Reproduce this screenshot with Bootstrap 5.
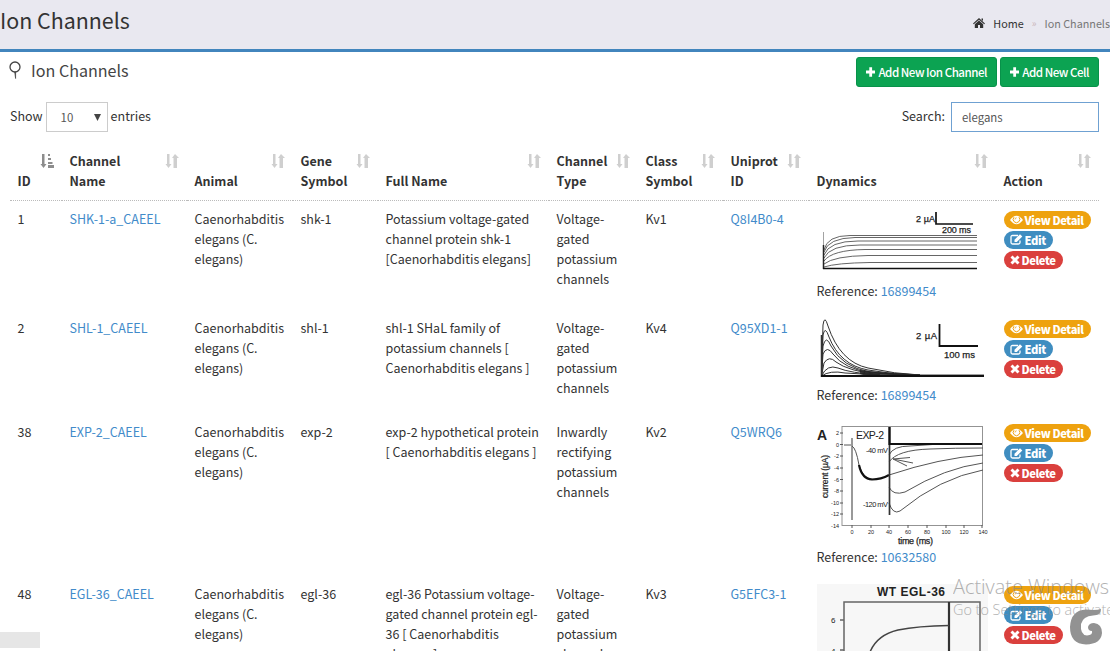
<!DOCTYPE html>
<html lang="en">
<head>
<meta charset="utf-8">
<title>Ion Channels</title>
<link href="https://cdn.jsdelivr.net/npm/bootstrap@5.3.0/dist/css/bootstrap.min.css" rel="stylesheet">
<script src="https://cdn.jsdelivr.net/npm/bootstrap@5.3.0/dist/js/bootstrap.bundle.min.js"></script>
<style>
html,body{height:651px;overflow:hidden}
body{font-family:"Noto Sans CJK SC",sans-serif;font-size:12.5px;line-height:20px;color:#333;background:#fff;position:relative}
a{color:#428bca;text-decoration:none}
.page-top{height:52px;background:#e9e8f0;border-bottom:3px solid #4285bd}
.page-top h1{font-size:21.4px;line-height:40px;font-weight:400;color:#333}
.crumbs{font-size:10.8px;color:#777;height:46px}
.crumbs a{color:#333}
.crumbs .sep{color:#ccb8bd;font-size:10px}
.portlet{padding:0 11px 0 10px}
.caption-row{height:38px;padding-top:5px}
.caption-text{font-size:16.1px;color:#444;margin-left:-1px}
.caption-label{padding:3px 0 0 10px}
.btn-add{background:#0ca352;border:1px solid #08924a;color:#fff;height:30px;border-radius:3px;font-size:11.6px;letter-spacing:-.5px;font-weight:500;padding:0 9px;gap:3px;white-space:nowrap}
.btn-ion{width:141px}.btn-cell{width:99px}
.btn-gap{gap:3px}
.filter-row{height:30px;margin-top:12px}
.filter-row .word{position:relative;top:-1px}
.len-box,.search-box{height:30px;border:1px solid #ccc;font-size:11.4px;color:#555;background:#fff}
.len-box{width:62px;margin:0 3px;padding:0 6px 0 14px}
.search-box{width:148px;border-color:#6fa1d2;padding:0 10px;margin-left:6px}
.channels{table-layout:fixed;width:1089px;margin-top:10px}
.channels th{height:58px;padding:8px 8px 9px 7.5px;vertical-align:bottom;position:relative;font-weight:700;border-bottom:1px dotted #bbb}
.channels td{padding:8px 8px 0 7.5px;vertical-align:top}
.channels th svg{position:absolute;right:8px;top:11px}
.row-a{height:109.500px}.row-b{height:104px}.row-c{height:162px}
.row-a{height:110px}
.trace{display:block;width:171px}
.tag{height:18px;border-radius:9px;color:#fff;font-weight:900;font-size:11.2px;letter-spacing:-.4px;line-height:18px;padding:0 0 0 6px;gap:2px;margin-bottom:2px;white-space:nowrap}
.tag svg{flex:none}
.tags{padding-top:2px}
.tag-view{background:#eea20f;width:87px}.tag-edit{background:#3f8dc0;width:49px}.tag-del{background:#da403d;width:59px}
.fig{font-family:"Liberation Sans",sans-serif;fill:#222}
.watermark{position:absolute;left:953px;top:574px;width:157px;overflow:hidden;color:#888;opacity:.65;white-space:nowrap;font-family:"Open Sans",sans-serif;font-weight:300}
.watermark .big{font-size:19.9px;line-height:26px}
.watermark .sub{font-size:14.4px;line-height:20px}
.status-tip{position:absolute;left:0;top:632px;width:40px;height:16px;background:#e6e6e6}
.corner-logo{position:absolute;left:1068px;top:607px}
</style>
</head>
<body>
<svg width="0" height="0" class="position-absolute">
<defs>
<symbol id="plus" viewBox="0 0 10 10"><path d="M3.500 0h3v3.500H10v3H6.500V10h-3V6.500H0v-3h3.500z" fill="#fff"/></symbol>
<symbol id="sort" viewBox="0 0 14 16"><path d="M2 1h2.500v10h2l-3 4-3-4H2zM8.500 15V5H7l3-4v14zM10 1l4 4h-2v10h-2z" fill="#cfcfcf"/></symbol>
<symbol id="eye" viewBox="0 0 13 10"><path d="M0 5Q6.500-3.500 13 5Q6.500 13.500 0 5z" fill="#fff"/><path d="M4 2.200A3.300 3.300 0 1 0 9 2.200" fill="none" stroke="#eea20f" stroke-width="1"/><path d="M5 4.500A1.600 1.600 0 0 1 6.600 2.800" fill="none" stroke="#eea20f" stroke-width=".8"/></symbol>
<symbol id="pen" viewBox="0 0 13 11"><path d="M8 1.500H2.500Q1 1.500 1 3v5.500Q1 10 2.500 10h6Q10 10 10 8.500V6.500" fill="none" stroke="#fff" stroke-width="1.300"/><path d="M4.500 8V5.800L10 .3 12.300 2.500 6.800 8z" fill="#fff"/></symbol>
<symbol id="cross" viewBox="0 0 10 10"><path d="M1.500 1.500l7 7M8.500 1.500l-7 7" stroke="#fff" stroke-width="2.900"/></symbol>
</defs>
</svg>
<header class="page-top d-flex justify-content-between">
<h1 class="m-0">Ion Channels</h1>
<nav class="crumbs d-flex align-items-center"><svg width="12" height="10" viewBox="0 0 12 10" class="me-2"><path d="M6 0L12 5.500l-.8.8L6 1.700.8 6.300 0 5.500zM8.500.5H10V3L8.500 1.700zM6 2.600L10.200 6.300V10H7V7H5v3H1.800V6.300z" fill="#333"/></svg><a href="#">Home</a><span class="sep mx-2">»</span><span>Ion Channels</span></nav>
</header>
<main class="portlet">
<div class="caption-row d-flex justify-content-between">
<div class="d-flex caption-text"><svg width="12" height="18" viewBox="0 0 12 18" class="mt-1"><circle cx="6" cy="6" r="5" fill="none" stroke="#444" stroke-width="1.300"/><path d="M5.700 11h.9v6.500z" fill="#444" stroke="#444" stroke-width=".7"/></svg><span class="caption-label">Ion Channels</span></div>
<div class="d-flex btn-gap"><button class="btn-add btn-ion d-flex align-items-center"><svg width="10" height="10"><use href="#plus"/></svg>Add New Ion Channel</button><button class="btn-add btn-cell d-flex align-items-center"><svg width="10" height="10"><use href="#plus"/></svg>Add New Cell</button></div>
</div>
<div class="filter-row d-flex justify-content-between align-items-center">
<div class="d-flex align-items-center"><span class="word">Show</span><div class="len-box d-flex align-items-center justify-content-between"><span>10</span><svg width="7" height="7"><path d="M0 0h7L3.500 7z" fill="#444"/></svg></div><span class="word">entries</span></div>
<div class="d-flex align-items-center"><span class="word">Search:</span><div class="search-box d-flex align-items-center">elegans</div></div>
</div>
<table class="channels">
<colgroup><col style="width:52px"><col style="width:125px"><col style="width:106px"><col style="width:85px"><col style="width:171px"><col style="width:89px"><col style="width:85px"><col style="width:86px"><col style="width:187px"><col style="width:103px"></colgroup>
<thead><tr>
<th>ID<svg width="14" height="16"><path d="M2 1h2.500v10h2l-3 4-3-4H2zM8 1h2v2H8zM8 5h3v2H8zM8 9h4.500v2H8zM8 12h6v3H8z" fill="#8d8d8d"/></svg></th>
<th>Channel<br>Name<svg width="14" height="16"><use href="#sort"/></svg></th><th>Animal<svg width="14" height="16"><use href="#sort"/></svg></th><th>Gene<br>Symbol<svg width="14" height="16"><use href="#sort"/></svg></th><th>Full Name<svg width="14" height="16"><use href="#sort"/></svg></th><th>Channel<br>Type<svg width="14" height="16"><use href="#sort"/></svg></th><th>Class<br>Symbol<svg width="14" height="16"><use href="#sort"/></svg></th><th>Uniprot<br>ID<svg width="14" height="16"><use href="#sort"/></svg></th><th>Dynamics<svg width="14" height="16"><use href="#sort"/></svg></th><th>Action<svg width="14" height="16"><use href="#sort"/></svg></th>
</tr></thead>
<tbody>
<tr class="row-a"><td>1</td><td><a href="#">SHK-1-a_CAEEL</a></td><td>Caenorhabditis<br>elegans (C.<br>elegans)</td><td>shk-1</td><td class="text-nowrap">Potassium voltage-gated<br>channel protein shk-1<br>[Caenorhabditis elegans]</td><td>Voltage-<br>gated<br>potassium<br>channels</td><td>Kv1</td><td><a href="#">Q8I4B0-4</a></td>
<td><svg class="trace" height="72" viewBox="817 209 171 72"><g fill="none" stroke="#555" stroke-width=".9"><path d="M823.500 232v36" stroke="#999"/><path d="M824 250Q827 235.500 850 235.500H977M824 252Q828 238 855 237.500H977M824 255Q829 241 858 241H977M824 258Q830 245 860 245H977M824 261Q832 250 865 249.500H977M824 264Q834 256 868 255.500H977M824 267Q836 263 870 262.500H977"/><path d="M823.500 245v24" stroke="#222" stroke-width="1.500"/></g><path d="M823 268.500H977M936 212v12h37" fill="none" stroke="#111" stroke-width="1.700"/><g class="fig" font-size="9" stroke="#222" stroke-width=".25"><text x="916" y="222" textLength="19">2 µA</text><text x="942" y="233" textLength="29">200 ms</text></g></svg>Reference: <a href="#">16899454</a></td>
<td><div class="tags"><div class="tag tag-view d-flex align-items-center"><svg width="13" height="10"><use href="#eye"/></svg>View Detail</div><div class="tag tag-edit d-flex align-items-center"><svg width="13" height="11"><use href="#pen"/></svg>Edit</div><div class="tag tag-del d-flex align-items-center"><svg width="10" height="10"><use href="#cross"/></svg>Delete</div></div></td></tr>
<tr class="row-b"><td>2</td><td><a href="#">SHL-1_CAEEL</a></td><td>Caenorhabditis<br>elegans (C.<br>elegans)</td><td>shl-1</td><td class="text-nowrap">shl-1 SHaL family of<br>potassium channels [<br>Caenorhabditis elegans ]</td><td>Voltage-<br>gated<br>potassium<br>channels</td><td>Kv4</td><td><a href="#">Q95XD1-1</a></td>
<td><svg class="trace" height="67" viewBox="817 318 171 67"><g fill="none" stroke="#333" stroke-width="1"><path d="M821.500 376L823 325Q824.500 314 828 326Q840 362 868 368Q895 374 920 375"/><path d="M821.500 376L823 335Q825 325 829 337Q840 365 868 370Q895 375 920 375"/><path d="M821.500 376L823 346Q826 334 831 346Q842 367 870 372Q895 375 920 375"/><path d="M821.500 376L823 354Q827 345 833 354Q844 369 872 373Q895 375 920 375"/><path d="M821.500 376L824 363Q829 355 836 362Q848 371 880 375"/><path d="M821.500 376Q827 364 838 368Q850 373 880 375"/><path d="M821.500 376Q830 370 845 373L880 375"/><path d="M821.500 335v42" stroke-width="1.500"/></g><path d="M860 370L880 372L920 374.500L984 374.500V377H870L860 374z" fill="#222" fill-opacity=".85"/><path d="M821 376H984M939.500 324v22H978" stroke="#111" stroke-width="1.800" fill="none"/><g class="fig" font-size="9.500" stroke="#222" stroke-width=".25"><text x="916" y="338.500" textLength="21">2 µA</text><text x="944" y="357.500" textLength="31">100 ms</text></g></svg>Reference: <a href="#">16899454</a></td>
<td><div class="tags"><div class="tag tag-view d-flex align-items-center"><svg width="13" height="10"><use href="#eye"/></svg>View Detail</div><div class="tag tag-edit d-flex align-items-center"><svg width="13" height="11"><use href="#pen"/></svg>Edit</div><div class="tag tag-del d-flex align-items-center"><svg width="10" height="10"><use href="#cross"/></svg>Delete</div></div></td></tr>
<tr class="row-c"><td>38</td><td><a href="#">EXP-2_CAEEL</a></td><td>Caenorhabditis<br>elegans (C.<br>elegans)</td><td>exp-2</td><td class="text-nowrap">exp-2 hypothetical protein<br>[ Caenorhabditis elegans ]</td><td>Inwardly<br>rectifying<br>potassium<br>channels</td><td>Kv2</td><td><a href="#">Q5WRQ6</a></td>
<td><svg class="trace" height="125" viewBox="817 422 171 125"><rect x="842" y="426.500" width="140.500" height="99" fill="none" stroke="#888" stroke-width=".9"/><g fill="none" stroke="#555" stroke-width="1"><path d="M852 438v82" stroke="#777" stroke-width="1.500"/><path d="M844 445H851M852 446Q856 448 859 465Q863 479 873 479.500"/><path d="M859 465Q862 479 872 479.500Q881 479.500 889 475" stroke="#111" stroke-width="2.200"/><path d="M889 455Q893 446 910 446L940 444M889 462Q897 450 930 449Q955 448 983 448M889 475Q940 458 983 455M889 487Q893 496 905 492Q945 468 983 463M889 503Q893 515 900 511Q940 478 983 470M893 459L913 463M893 459L910 457.500M893 459L907 466M840 433h3M840 444.500h3M840 456h3M840 468h3M840 479.500h3M840 491h3M840 503h3M840 514h3M852 525v3M871 525v3M889 525v3M908 525v3M927 525v3M946 525v3M964 525v3M982 525v3"/></g><path d="M889.500 427V515" stroke="#333" stroke-width="1.700"/><path d="M889.500 427V444H982" stroke="#111" stroke-width="2.200" fill="none"/><g class="fig"><text x="817" y="440" font-size="14" font-weight="700">A</text><text x="856" y="438.500" font-size="10.500" textLength="28">EXP-2</text><text x="866" y="453" font-size="7.500" textLength="22">-40 mV</text><text x="863" y="507" font-size="7.500" textLength="25">-120 mV</text><text x="898" y="544" font-size="9" textLength="35" stroke="#222" stroke-width=".25">time (ms)</text><text transform="translate(828 498) rotate(-90)" font-size="8.500" textLength="43" stroke="#222" stroke-width=".2">current (µA)</text><g font-size="5.500" text-anchor="end"><text x="839" y="435">2</text><text x="839" y="446.500">0</text><text x="839" y="458">-2</text><text x="839" y="470">-4</text><text x="839" y="481.500">-6</text><text x="839" y="493">-8</text><text x="839" y="505">-10</text><text x="839" y="516">-12</text><text x="839" y="528">-14</text></g><g font-size="5.500" text-anchor="middle"><text x="852" y="534">0</text><text x="871" y="534">20</text><text x="889" y="534">40</text><text x="908" y="534">60</text><text x="927" y="534">80</text><text x="946" y="534">100</text><text x="964" y="534">120</text><text x="983" y="534">140</text></g></g></svg>Reference: <a href="#">10632580</a></td>
<td><div class="tags"><div class="tag tag-view d-flex align-items-center"><svg width="13" height="10"><use href="#eye"/></svg>View Detail</div><div class="tag tag-edit d-flex align-items-center"><svg width="13" height="11"><use href="#pen"/></svg>Edit</div><div class="tag tag-del d-flex align-items-center"><svg width="10" height="10"><use href="#cross"/></svg>Delete</div></div></td></tr>
<tr><td>48</td><td><a href="#">EGL-36_CAEEL</a></td><td>Caenorhabditis<br>elegans (C.<br>elegans)</td><td>egl-36</td><td class="text-nowrap">egl-36 Potassium voltage-<br>gated channel protein egl-<br>36 [ Caenorhabditis<br>elegans ]</td><td>Voltage-<br>gated<br>potassium<br>channels</td><td>Kv3</td><td><a href="#">G5EFC3-1</a></td>
<td><svg class="trace" height="100" viewBox="817 584 171 100"><rect x="817" y="584" width="171" height="100" fill="#f7f7f7"/><path d="M844 684V602H980V684M840 620h4M840 650h4" fill="none" stroke="#666" stroke-width="1.500"/><path d="M949 602v82" stroke="#333" stroke-width="2.200"/><path d="M870 652Q877 635 898 630Q918 626 949 625.500" fill="none" stroke="#444" stroke-width="1.500"/><g class="fig"><text x="877" y="596" font-size="12" font-weight="700" textLength="68">WT EGL-36</text><text x="831" y="623" font-size="8">6</text><text x="831" y="654" font-size="8">4</text></g></svg></td>
<td><div class="tags"><div class="tag tag-view d-flex align-items-center"><svg width="13" height="10"><use href="#eye"/></svg>View Detail</div><div class="tag tag-edit d-flex align-items-center"><svg width="13" height="11"><use href="#pen"/></svg>Edit</div><div class="tag tag-del d-flex align-items-center"><svg width="10" height="10"><use href="#cross"/></svg>Delete</div></div></td></tr>
</tbody></table>
</main>
<div class="status-tip"></div>
<div class="watermark"><div class="big">Activate Windows</div><div class="sub">Go to Settings to activate Windows.</div></div>
<svg class="corner-logo" width="38" height="40" viewBox="1068 607 38 40"><path d="M1101 609Q1101 615 1093 615.500Q1083 616 1081 624Q1080 635 1087 635.500Q1093 635 1092 631Q1088 631 1088 627Q1089 623 1094 623Q1102 624 1102 633Q1101 644 1086 644.500Q1070 644 1070 627Q1071 610 1086 609.500Q1096 610.500 1101 609z" fill="#929292"/></svg>
</body></html>
